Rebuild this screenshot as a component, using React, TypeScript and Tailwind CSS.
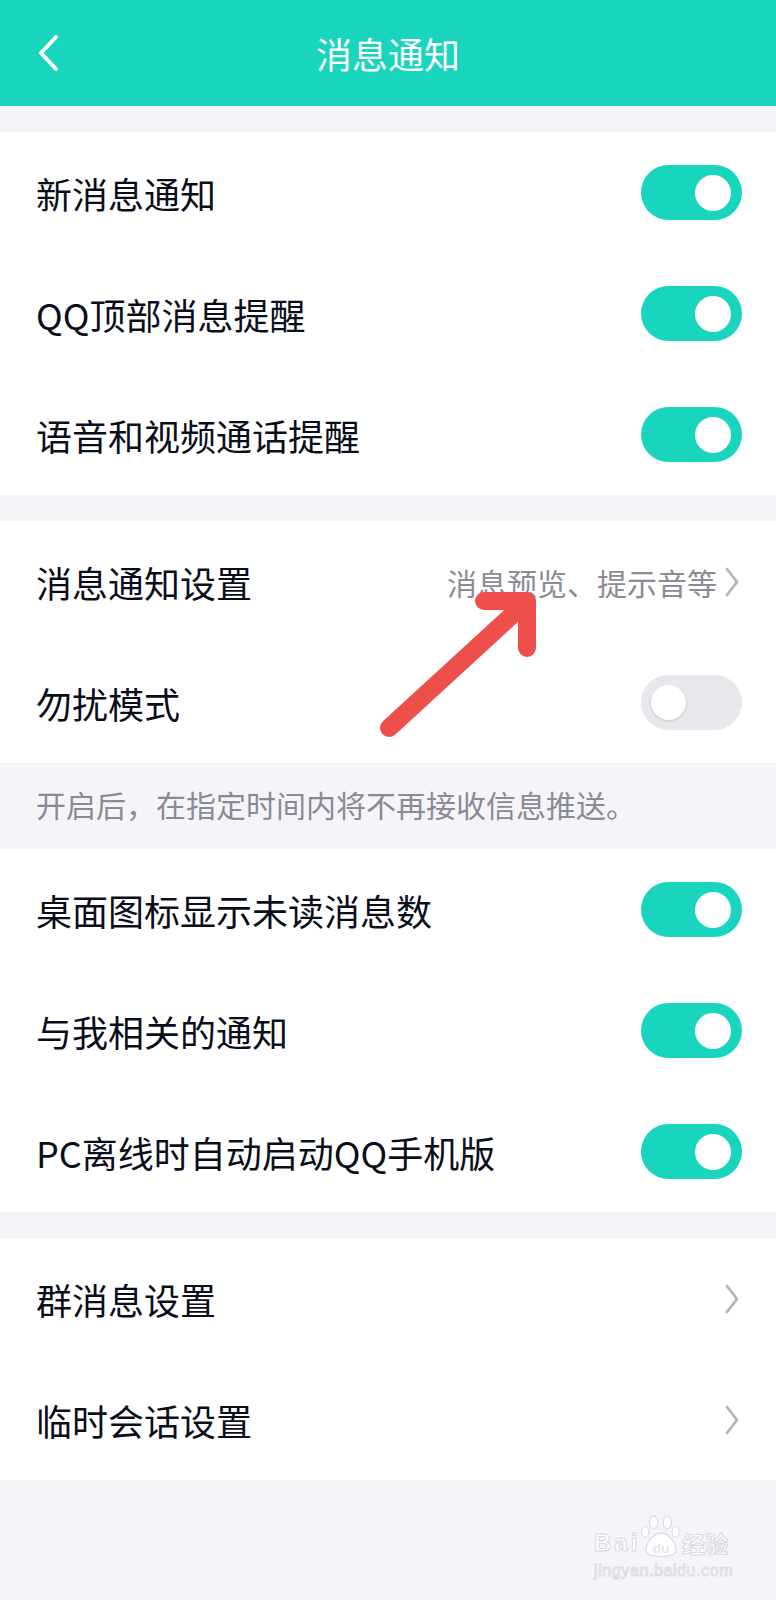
import React from 'react';

const FONT = "font-['Noto_Sans_CJK_SC','Noto_Sans',sans-serif]";

interface RowProps {
  label: string;
  toggle?: boolean;
  on?: boolean;
  hint?: string;
}

const Toggle: React.FC<{ on: boolean }> = ({ on }) =>
  on ? (
    <div className="flex h-[55px] w-[101px] items-center justify-end rounded-full bg-[#19d5be] pr-[11px]">
      <div className="h-[36px] w-[36px] rounded-full bg-white" />
    </div>
  ) : (
    <div className="flex h-[55px] w-[101px] items-center rounded-full bg-[#e7e7ec] pl-[10px]">
      <div className="h-[35px] w-[35px] rounded-full bg-white shadow-[0_1px_3px_rgba(0,0,0,0.15)]" />
    </div>
  );

const Chevron = () => (
  <svg width="16" height="30" viewBox="0 0 16 30" className="shrink-0">
    <path d="M3 2 L13 15 L3 28" fill="none" stroke="#b4b4bc" strokeWidth="2.8" strokeLinecap="round" strokeLinejoin="round" />
  </svg>
);

const Row: React.FC<RowProps> = ({ label, toggle, on = true, hint }) => (
  <div className="flex h-[121px] items-center justify-between pl-[36px] pr-[34px]">
    <span className="text-[36px] leading-none text-[#0a0d1a]">{label}</span>
    {toggle ? (
      <Toggle on={on} />
    ) : (
      <div className="flex items-center gap-[7px] pr-[2px]">
        {hint && <span className="text-[30px] leading-none text-[#8c8c96]">{hint}</span>}
        <Chevron />
      </div>
    )}
  </div>
);

export default function App() {
  return (
    <div className={`relative min-h-[1600px] w-[776px] bg-[#f5f5f9] ${FONT}`}>
      {/* Header */}
      <div className="relative flex h-[106px] items-center justify-center bg-[#19d5be]">
        <svg width="24" height="38" viewBox="0 0 24 38" className="absolute left-[36px] top-[34px]">
          <path d="M20 3 L5 19 L20 35" fill="none" stroke="white" strokeWidth="4" strokeLinecap="round" strokeLinejoin="round" />
        </svg>
        <span className="text-[36px] leading-none text-white">消息通知</span>
      </div>

      <div className="h-[26px]" />
      <div className="bg-white">
        <Row label="新消息通知" toggle />
        <Row label="QQ顶部消息提醒" toggle />
        <Row label="语音和视频通话提醒" toggle />
      </div>

      <div className="h-[26px]" />
      <div className="bg-white">
        <Row label="消息通知设置" hint="消息预览、提示音等" />
        <Row label="勿扰模式" toggle on={false} />
      </div>

      <div className="flex h-[86px] items-center pb-[4px] pl-[36px]">
        <span className="text-[30px] leading-none text-[#8a8a95]">开启后，在指定时间内将不再接收信息推送。</span>
      </div>

      <div className="bg-white">
        <Row label="桌面图标显示未读消息数" toggle />
        <Row label="与我相关的通知" toggle />
        <Row label="PC离线时自动启动QQ手机版" toggle />
      </div>

      <div className="h-[26px]" />
      <div className="bg-white">
        <Row label="群消息设置" />
        <Row label="临时会话设置" />
      </div>

      {/* red annotation arrow */}
      <svg width="776" height="1600" className="pointer-events-none absolute left-0 top-0">
        <g fill="none" stroke="#ee4f4b" strokeWidth="18" strokeLinecap="round" strokeLinejoin="round">
          <path d="M389 728 L522 606" />
          <path d="M484 601 L527 601 L527 648" />
        </g>
      </svg>

      {/* watermark */}
      <div className="pointer-events-none absolute left-[594px] top-[1514px] flex flex-col items-start">
        <div className="flex items-end">
          <span className="font-['Liberation_Sans',sans-serif] text-[24px] font-bold leading-none tracking-[3px] text-white [-webkit-text-stroke:1px_#d9d9df]">
            Bai
          </span>
          <svg width="42" height="44" viewBox="0 0 40 42" className="-mb-[3px]">
            <g fill="white" stroke="#d9d9df" strokeWidth="1">
              <ellipse cx="13" cy="8" rx="4" ry="6" />
              <ellipse cx="26" cy="8" rx="4" ry="6" />
              <ellipse cx="5" cy="17" rx="3.5" ry="5" />
              <ellipse cx="34" cy="17" rx="3.5" ry="5" />
              <path d="M20 18 C12 18 4 30 6 36 C8 42 32 42 34 36 C36 30 28 18 20 18 Z" />
            </g>
            <text x="20" y="37" textAnchor="middle" fontSize="13" fontWeight="bold" fontFamily="Liberation Sans, sans-serif" fill="#e6e6ec">
              du
            </text>
          </svg>
          <span className="text-[23px] font-bold leading-none text-white [-webkit-text-stroke:1px_#d9d9df]">经验</span>
        </div>
        <span className="mt-[8px] font-['Liberation_Sans',sans-serif] text-[16px] leading-none tracking-[0.6px] text-white [-webkit-text-stroke:1px_#dcdce2]">
          jingyan.baidu.com
        </span>
      </div>
    </div>
  );
}
